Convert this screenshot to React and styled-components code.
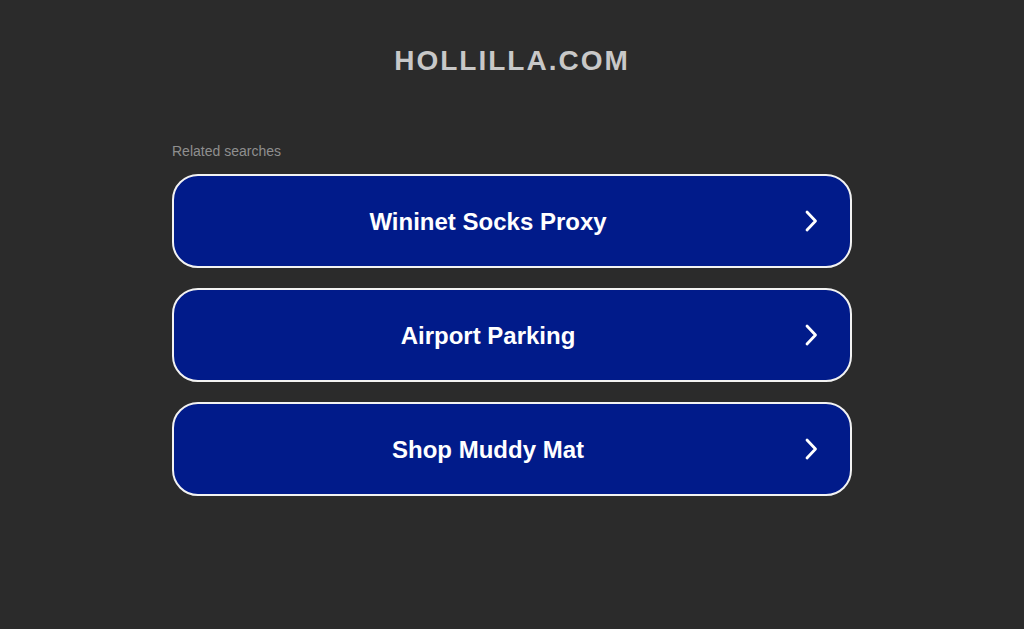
import React from 'react';
import styled, { createGlobalStyle } from 'styled-components';

const GlobalStyle = createGlobalStyle`
  html, body {
    margin: 0;
    padding: 0;
    background-color: #2b2b2b;
    font-family: "Liberation Sans", Arial, sans-serif;
  }
`;

const Page = styled.div`
  min-height: 629px;
  display: flex;
  flex-direction: column;
  align-items: center;
`;

const Domain = styled.h1`
  margin: 45px 0 0;
  font-size: 28px;
  line-height: 32px;
  font-weight: bold;
  letter-spacing: 2px;
  color: #c8c8c8;
`;

const Searches = styled.div`
  width: 680px;
  margin-top: 66px;
  display: flex;
  flex-direction: column;
  gap: 20px;
`;

const Label = styled.div`
  font-size: 14px;
  line-height: 16px;
  color: #8f8f8f;
  margin-bottom: -5px;
`;

const SearchLink = styled.a`
  box-sizing: border-box;
  height: 94px;
  display: flex;
  align-items: center;
  padding: 0 30px 0 40px;
  background-color: #011b8a;
  border: 2px solid #f2f2f2;
  border-radius: 26px;
  color: #ffffff;
  text-decoration: none;
  cursor: pointer;
`;

const Text = styled.span`
  flex: 1;
  padding: 2px 40px 0 0;
  text-align: center;
  font-size: 24px;
  font-weight: bold;
`;

const Arrow = () => (
  <svg width="18" height="24" viewBox="0 0 18 24" fill="none">
    <path d="M5 3 L13.5 12 L5 21" stroke="#fff" strokeWidth="2.8" strokeLinecap="round" strokeLinejoin="round" />
  </svg>
);

const items = ['Wininet Socks Proxy', 'Airport Parking', 'Shop Muddy Mat'];

export default function App() {
  return (
    <>
      <GlobalStyle />
      <Page>
        <Domain>HOLLILLA.COM</Domain>
        <Searches>
          <Label>Related searches</Label>
          {items.map((t) => (
            <SearchLink key={t}>
              <Text>{t}</Text>
              <Arrow />
            </SearchLink>
          ))}
        </Searches>
      </Page>
    </>
  );
}
